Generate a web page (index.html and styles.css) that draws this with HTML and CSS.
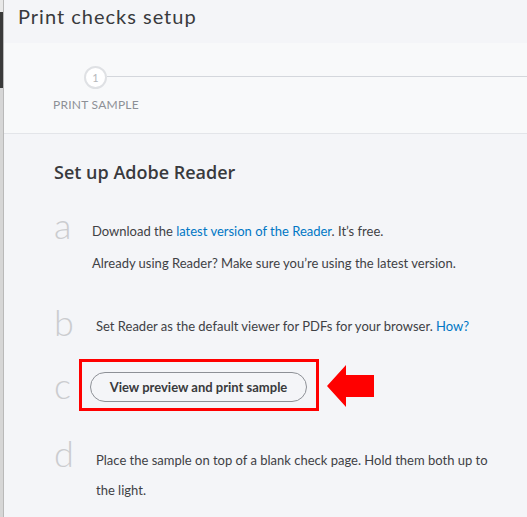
FILE: index.html
```html
<!DOCTYPE html>
<html>
<head>
<meta charset="utf-8">
<link rel="stylesheet" href="styles.css">
</head>
<body>
<div class="page">
  <div class="edge">
    <div class="edge-top"></div>
    <div class="edge-dark"></div>
    <div class="edge-rest"></div>
  </div>
  <div class="panel">
    <header class="head">
      <h1 class="title">Print checks setup</h1>
    </header>
    <div class="stepper">
      <div class="step">
        <div class="step-track">
          <span class="step-circle">1</span>
          <span class="step-line"></span>
        </div>
        <div class="step-label">PRINT SAMPLE</div>
      </div>
    </div>
    <main class="content">
      <h2 class="section">Set up Adobe Reader</h2>
      <div class="item item-a">
        <span class="letter">a</span>
        <div class="text">
          <p>Download the <a class="link">latest version of the Reader</a>. It’s free.</p>
          <p>Already using Reader? Make sure you’re using the latest version.</p>
        </div>
      </div>
      <div class="item item-b">
        <span class="letter">b</span>
        <div class="text">
          <p>Set Reader as the default viewer for PDFs for your browser. <a class="link">How?</a></p>
        </div>
      </div>
      <div class="item item-c">
        <span class="letter">c</span>
        <div class="callout">
          <div class="redbox">
            <button class="btn">View preview and print sample</button>
          </div>
          <svg class="arrow" width="50" height="42" viewBox="0 0 50 42">
            <polygon points="1,21 20,0 20,10 48,10 48,32 20,32 20,42" fill="#ff0000"/>
          </svg>
        </div>
      </div>
      <div class="item item-d">
        <span class="letter">d</span>
        <div class="text">
          <p>Place the sample on top of a blank check page. Hold them both up to the light.</p>
        </div>
      </div>
    </main>
  </div>
</div>
</body>
</html>
```

FILE: styles.css
```css
* { box-sizing: border-box; }
html, body { margin: 0; padding: 0; }
body {
  width: 527px;
  height: 517px;
  overflow: hidden;
  background: #f4f5f8;
  font-family: Lato, "Open Sans", Arial, sans-serif;
  color: #393a3d;
}
.page {
  display: flex;
  height: 517px;
}
.edge {
  width: 4px;
  flex: none;
  display: flex;
  flex-direction: column;
  background: #d6d6d6;
  border-right: 1px solid #b9b9b9;
}
.edge-top { height: 12px; background: #e8e8e8; }
.edge-dark { height: 76px; background: #3a3a3a; }
.edge-rest { flex: 1; background: #d6d6d6; }
.panel {
  flex: 1;
  display: flex;
  flex-direction: column;
  background: #f4f5f8;
}
.head {
  height: 43px;
  padding: 2px 0 0 14px;
  background: #f4f5f8;
}
.title {
  margin: 0;
  font-size: 20px;
  font-weight: 400;
  line-height: 28px;
  letter-spacing: 1px;
  color: #393a3d;
}
.stepper {
  height: 91px;
  background: #f8f9fa;
  border-bottom: 1px solid #e3e5e9;
  padding: 23px 0 0 49px;
}
.step-track {
  display: flex;
  align-items: center;
  margin-left: 31px;
}
.step-circle {
  width: 23px;
  height: 23px;
  border-radius: 50%;
  border: 2px solid #dfe1e4;
  background: #fff;
  color: #b5b7bb;
  font-size: 11px;
  display: flex;
  align-items: center;
  justify-content: center;
  flex: none;
}
.step-line {
  flex: 1;
  width: 420px;
  height: 1px;
  background: #d4d7dc;
  margin-top: -3px;
}
.step-label {
  margin-top: 8px;
  font-size: 12px;
  letter-spacing: 0.25px;
  color: #8d9096;
}
.content {
  padding: 26px 0 0 50px;
}
.section {
  margin: 0 0 23px;
  font-family: "Open Sans", Lato, sans-serif;
  font-size: 18px;
  font-weight: 600;
  line-height: 24px;
  color: #393a3d;
}
.item {
  display: flex;
  align-items: flex-start;
}
.letter {
  width: 38px;
  flex: none;
  font-size: 36px;
  font-weight: 300;
  line-height: 36px;
  color: #cbcccf;
}
.text p {
  margin: 0;
  font-size: 13px;
  line-height: 32px;
  color: #404145;
}
.link { color: #0077c5; text-decoration: none; }
.item-a .text { padding-top: 8px; }
.item-b { margin-top: 25px; }
.item-b .letter { width: 42px; }
.item-b .text { padding-top: 6px; }
.item-c { margin-top: 17px; }
.item-c .letter { width: 25px; margin-top: 8px; }
.callout { display: flex; align-items: center; }
.redbox {
  width: 240px;
  height: 52px;
  border: 3px solid #ff0000;
  padding: 10px 0 0 8px;
}
.btn {
  width: 217px;
  height: 30px;
  border: 1px solid #8d9096;
  border-radius: 15px;
  background: #f4f5f8;
  font-family: inherit;
  font-size: 13px;
  font-weight: 700;
  color: #393a3d;
  padding: 0;
}
.arrow { margin-left: 7px; margin-top: 2px; }
.item-d { margin-top: 24px; }
.item-d .letter { width: 42px; }
.item-d .text { padding-top: 10px; width: 410px; }
.item-d .text p { line-height: 30px; }
```
